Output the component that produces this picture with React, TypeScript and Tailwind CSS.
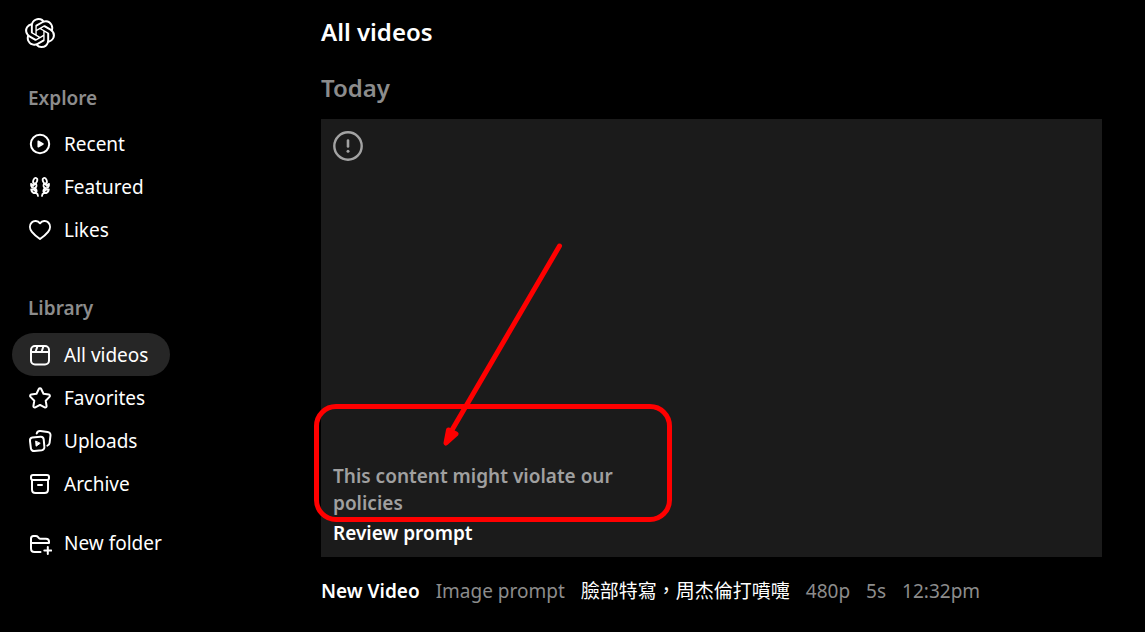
import type { ReactNode } from "react";
import { SiOpenai } from "react-icons/si";

function Icon({ children }: { children: ReactNode }) {
  return (
    <svg
      viewBox="0 0 24 24"
      className="size-6 shrink-0"
      fill="none"
      stroke="currentColor"
      strokeWidth="2"
      strokeLinecap="round"
      strokeLinejoin="round"
      aria-hidden="true"
    >
      {children}
    </svg>
  );
}

const RecentIcon = () => (
  <Icon>
    <circle cx="12" cy="12" r="9.2" />
    <path d="M10.2 9.2v5.600l4.800-2.800z" fill="currentColor" strokeWidth="1.5" />
  </Icon>
);

const LaurelHalf = () => (
  <>
    <ellipse cx="7.200" cy="5.700" rx="1.900" ry="2.900" transform="rotate(20 7.200 5.700)" />
    <path d="M3 8.800c-.3 2.700 1.300 4.500 3.900 4.400 1.800-1.300 2.100-3 1-4.500-1.300.2-2.100 1-2.600 2.100C4.900 9.800 4 9.100 3 8.800z" />
    <path d="M3.200 14.500c.4 2.500 2.200 3.900 4.900 3.700-.3-2.600-2.100-4-4.900-3.700zM6.900 13.200c1.600.8 2.200 2.500 1.200 5 1.300.4 1.900 1.300 1.900 2.700" />
  </>
);

const FeaturedIcon = () => (
  <Icon>
    <g strokeWidth="1.800">
      <LaurelHalf />
      <g transform="translate(24 0) scale(-1 1)">
        <LaurelHalf />
      </g>
    </g>
  </Icon>
);

const LikesIcon = () => (
  <Icon>
    <path d="M12 5.300C9.800 2.500 5.900 2.300 3.700 4.500c-2.400 2.500-2.200 6.400.2 9.300 2 2.500 4.600 4.700 8.100 7.200 3.500-2.500 6.100-4.700 8.100-7.200 2.400-2.900 2.600-6.800.2-9.300C18.100 2.300 14.200 2.500 12 5.300z" />
  </Icon>
);

const VideosIcon = () => (
  <Icon>
    <rect x="3" y="3" width="18" height="18.500" rx="4" />
    <path d="M3 9h18M9.500 3.200 7.500 9M15.500 3.200 13.500 9" />
  </Icon>
);

const FavoritesIcon = () => (
  <Icon>
    <path d="M10.800 3c.5-1 1.900-1 2.400 0l2.300 4.800 5.300.8c1.100.2 1.500 1.500.7 2.300l-3.800 3.800.9 5.300c.2 1.100-.9 1.900-1.900 1.400L12 18.900l-4.700 2.500c-1 .5-2.100-.3-1.900-1.400l.9-5.300-3.800-3.800c-.8-.8-.4-2.100.7-2.300l5.300-.8z" />
  </Icon>
);

const UploadsIcon = () => (
  <Icon>
    <path d="M4.300 8.600l8-.8c1.800-.2 3.200 1 3.400 2.700l.7 7.400c.2 1.700-1 3.200-2.700 3.400l-7.400.7c-1.700.2-3.200-1-3.400-2.700l-.9-7.200c-.2-1.800.7-3.300 2.300-3.500z" />
    <path d="M8.700 4.600c.5-1.800 1.900-2.700 3.700-2.500l7.200.8c1.900.2 3.100 1.700 2.900 3.500l-.9 7.400c-.2 1.500-1 2.400-2.200 2.800" />
    <path d="M7.700 12.400l.4 4.800 3.800-2.700z" fill="currentColor" strokeWidth="1" />
  </Icon>
);

const ArchiveIcon = () => (
  <Icon>
    <rect x="3" y="3" width="18" height="5" rx="2" />
    <path d="M4 8v9.500c0 2 1.500 3.500 3.500 3.500h9c2 0 3.500-1.500 3.500-3.500V8M10 13h4" />
  </Icon>
);

const NewFolderIcon = () => (
  <Icon>
    <path d="M12.500 21H6.500C4.500 21 3 19.500 3 17.500V7.500C3 6 4 5 5.500 5h2.300c1 0 1.700.4 2.300 1.100l.6.700c.5.600 1.100.9 1.900.9h5.400c1.800 0 3 1.200 3 3V12M3 12h18" />
    <path d="M19.800 16v7M16.300 19.500h7" />
  </Icon>
);

function NavItem({ icon, label, active = false }: { icon: ReactNode; label: string; active?: boolean }) {
  return (
    <li>
      <a
        href="#"
        aria-current={active ? "page" : undefined}
        className={
          active
            ? "flex h-[43px] w-fit items-center gap-3 rounded-full bg-[#262626] pr-[22px] pl-4"
            : "flex h-[43px] w-fit items-center gap-3 rounded-full pr-[22px] pl-4"
        }
      >
        {icon}
        {label}
      </a>
    </li>
  );
}

export default function App() {
  return (
    <div className="flex min-h-screen bg-black font-['Noto_Sans','Noto_Sans_CJK_TC',sans-serif] text-[19px] leading-7 text-white">
      <aside className="w-[309px] shrink-0 pl-3">
        <a href="#" aria-label="Home" className="mt-[18px] ml-[13px] block w-fit">
          <SiOpenai className="size-[30px]" />
        </a>
        <nav className="pt-9">
          <h2 className="pl-4 font-semibold text-[#8c8c8c]">Explore</h2>
          <ul className="pt-[10px]">
            <NavItem icon={<RecentIcon />} label="Recent" />
            <NavItem icon={<FeaturedIcon />} label="Featured" />
            <NavItem icon={<LikesIcon />} label="Likes" />
          </ul>
          <h2 className="pt-[43px] pl-4 font-semibold text-[#8c8c8c]">Library</h2>
          <ul className="pt-[11px]">
            <NavItem icon={<VideosIcon />} label="All videos" active />
            <NavItem icon={<FavoritesIcon />} label="Favorites" />
            <NavItem icon={<UploadsIcon />} label="Uploads" />
            <NavItem icon={<ArchiveIcon />} label="Archive" />
          </ul>
          <ul className="pt-4">
            <NavItem icon={<NewFolderIcon />} label="New folder" />
          </ul>
        </nav>
      </aside>

      <main className="min-w-0 flex-1 pt-4 pr-[43px] pl-3">
        <h1 className="text-2xl font-semibold">All videos</h1>
        <h2 className="pt-6 text-2xl font-semibold text-[#8c8c8c]">Today</h2>

        <section className="relative mt-[15px] flex flex-col items-start justify-between gap-[302px] bg-[#1b1b1b] px-3 pt-3 pb-[10px]">
          <svg viewBox="0 0 30 30" className="size-[30px]" fill="none" stroke="#a3a3a3" strokeLinecap="round" aria-hidden="true">
            <circle cx="15" cy="15" r="13.700" strokeWidth="2.400" />
            <path d="M15 9.500v6" strokeWidth="2.600" />
            <circle cx="15" cy="20.300" r="1.500" fill="#a3a3a3" stroke="none" />
          </svg>
          <div className="w-[300px]">
            <p className="leading-[27px] font-semibold text-[#a0a0a0]">This content might violate our policies</p>
            <button type="button" className="mt-[2px] block leading-7 font-semibold">
              Review prompt
            </button>
          </div>
          <div className="pointer-events-none absolute top-[285px] -left-[7px] h-[118px] w-[358px] rounded-[22px] border-5 border-[#ff0000]" />
          <svg
            viewBox="0 0 130 210"
            className="pointer-events-none absolute top-[121px] left-[116px] h-[210px] w-[130px]"
            stroke="#ff0000"
            strokeLinecap="round"
            strokeLinejoin="round"
            aria-hidden="true"
          >
            <path d="M122.500 6 15 190" strokeWidth="5" />
            <path d="M9 203 11.500 190 19 194z" fill="#ff0000" strokeWidth="5" />
          </svg>
        </section>

        <footer className="mt-5 flex gap-4 whitespace-nowrap text-[#8c8c8c]">
          <span className="font-semibold text-white">New Video</span>
          <span>Image prompt</span>
          <span className="text-white">臉部特寫，周杰倫打噴嚏</span>
          <span>480p</span>
          <span>5s</span>
          <span>12:32pm</span>
        </footer>
      </main>
    </div>
  );
}
